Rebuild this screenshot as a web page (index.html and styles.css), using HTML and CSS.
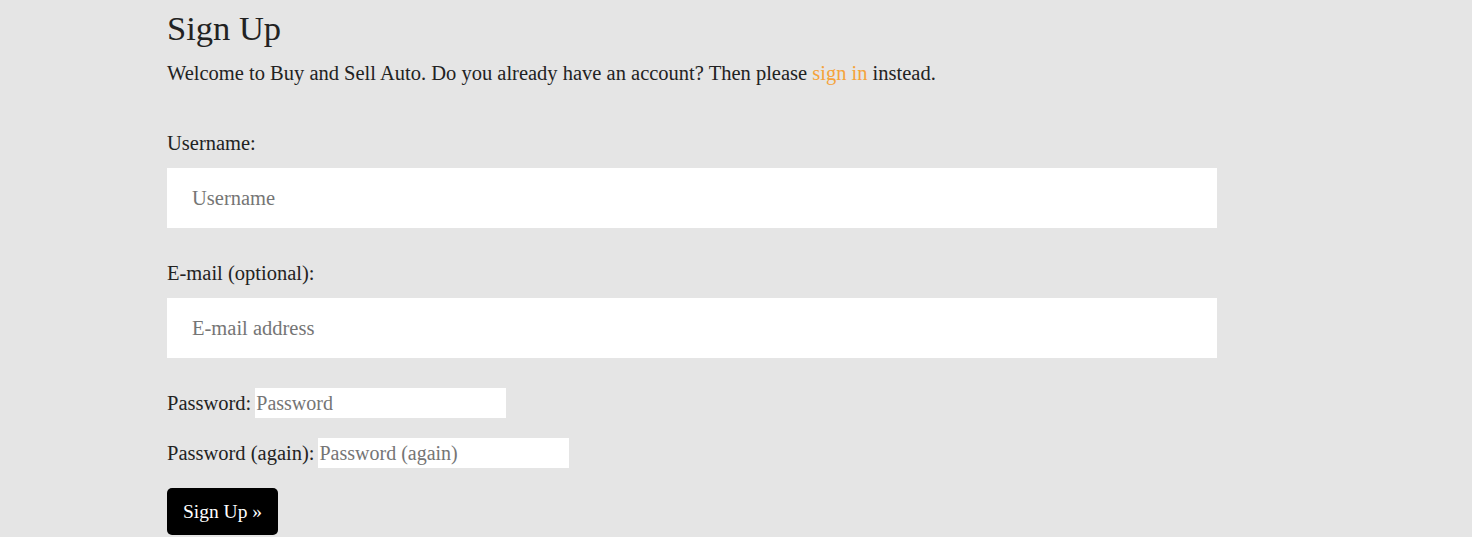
FILE: index.html
```html
<!DOCTYPE html>
<html>
<head>
<meta charset="utf-8">
<link rel="stylesheet" href="styles.css">
</head>
<body>
<main class="page">
  <h1 class="title">Sign Up</h1>
  <p class="intro">Welcome to Buy and Sell Auto. Do you already have an account? Then please <a class="link" href="#">sign in</a> instead.</p>
  <form class="form">
    <div class="field">
      <label class="label">Username:</label>
      <input class="input-wide" type="text" placeholder="Username">
    </div>
    <div class="field">
      <label class="label">E-mail (optional):</label>
      <input class="input-wide" type="text" placeholder="E-mail address">
    </div>
    <div class="inline-field">
      <label class="label">Password:</label>
      <input class="input-small" type="password" placeholder="Password">
    </div>
    <div class="inline-field">
      <label class="label">Password (again):</label>
      <input class="input-small" type="password" placeholder="Password (again)">
    </div>
    <button class="btn" type="button">Sign Up »</button>
  </form>
</main>
</body>
</html>
```
FILE: styles.css
```css
html, body {
  margin: 0;
  padding: 0;
  background: #e5e5e5;
}
body {
  font-family: "Liberation Serif", "DejaVu Serif", serif;
  color: #222;
  font-size: 20.5px;
}
.page {
  margin-left: 167px;
  width: 1050px;
}
.title {
  font-weight: normal;
  font-size: 34.5px;
  line-height: 40px;
  margin: 8px 0 0 0;
}
.intro {
  margin: 10px 0 0 0;
  line-height: 30px;
}
.link {
  color: #f5a33a;
  text-decoration: none;
}
.form {
  margin-top: 40px;
  display: flex;
  flex-direction: column;
  align-items: flex-start;
}
.field {
  display: flex;
  flex-direction: column;
  width: 100%;
  margin-bottom: 30px;
}
.label {
  line-height: 30px;
  margin-bottom: 10px;
}
.inline-field .label {
  margin: 0 4px 0 0;
}
.input-wide {
  box-sizing: border-box;
  width: 100%;
  height: 60px;
  border: none;
  background: #fff;
  padding: 0 25px;
  font: inherit;
  font-size: 20.5px;
  color: #222;
  outline: none;
}
.inline-field {
  display: flex;
  align-items: center;
  height: 30px;
  margin-bottom: 20px;
}
.input-small {
  box-sizing: border-box;
  width: 251px;
  height: 30px;
  border: none;
  background: #fff;
  padding: 0 1px;
  font: inherit;
  font-size: 20px;
  color: #222;
  outline: none;
}
::placeholder {
  color: #757575;
  opacity: 1;
}
.btn {
  width: 111px;
  height: 47px;
  background: #000;
  color: #fff;
  border: none;
  border-radius: 5px;
  font: inherit;
  font-size: 19.5px;
  padding: 0;
}
```
